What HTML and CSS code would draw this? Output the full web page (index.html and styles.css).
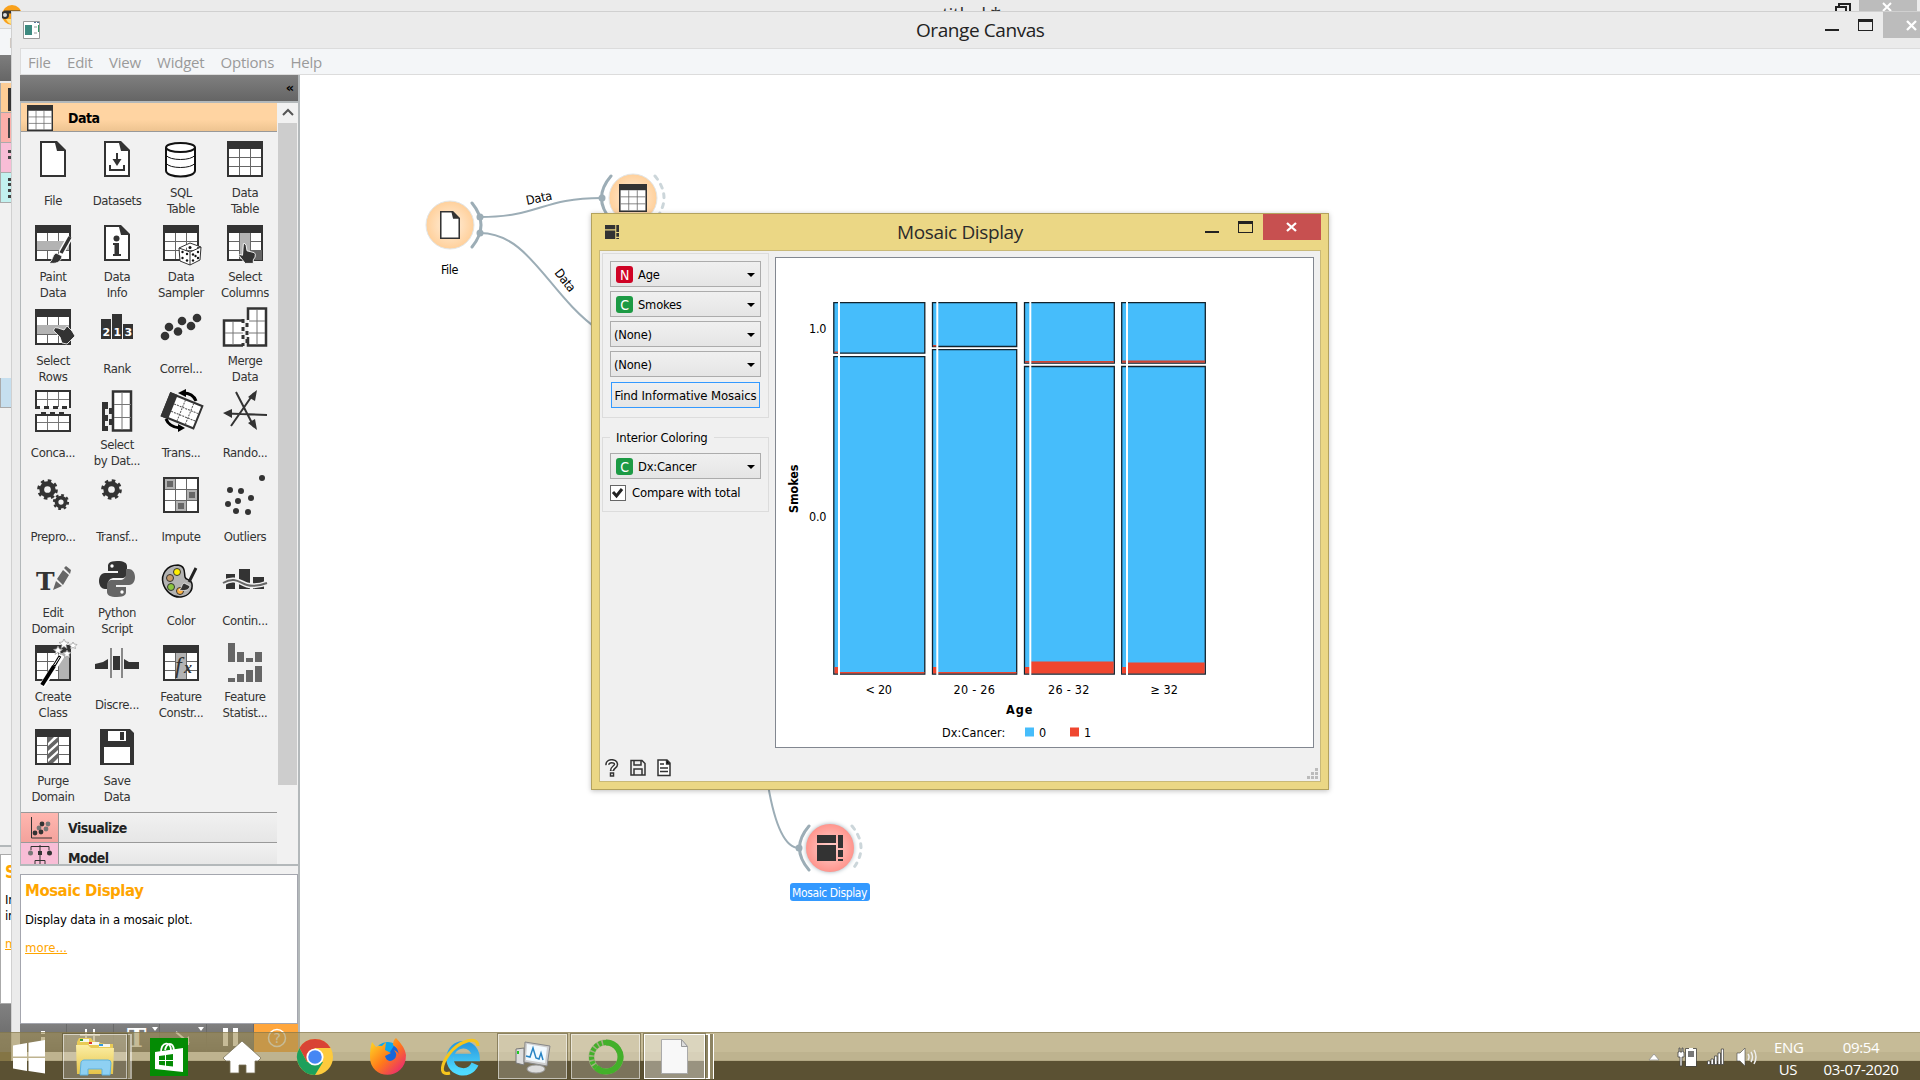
FILE: index.html
```html
<!DOCTYPE html>
<html lang="en">
<head>
<meta charset="utf-8">
<title>Orange Canvas</title>
<link rel="stylesheet" href="styles.css">
</head>
<body>
<svg class="defs" width="0" height="0">
  <defs>
    <symbol id="tbl" viewBox="0 0 48 48"><path fill="#333" d="M6 6h36v36H6z"/><path fill="#fff" d="M8 14h32v26H8z"/><path stroke="#666" d="M8 22.500h32M8 31.500h32M18.500 14v26M29.500 14v26"/></symbol>
    <symbol id="doc" viewBox="0 0 48 48"><path fill="#333" d="M11 6h17l9 9v27H11z"/><path fill="#fff" d="M13 8h13l2 8 7 0v24H13z"/></symbol>
    <symbol id="gear" viewBox="0 0 24 24"><circle cx="12" cy="12" r="6" fill="none" stroke="#333" stroke-width="5"/><circle cx="12" cy="12" r="9.300" fill="none" stroke="#333" stroke-width="3" stroke-dasharray="3.650 3.650"/></symbol>
    <symbol id="hand" viewBox="0 0 20 24"><path fill="#333" stroke="#fff" stroke-width="1" d="M6 1q2-1 3 2l1 6 8 2q2 1 1 5l-2 3v4H8L1 14q0-2 4 0z"/></symbol>
    <symbol id="mosaic" viewBox="0 0 26 26"><path fill="#333" d="M0 0h19v8H0zM0 10h19v16H0zM21 0h5v13h-5zM21 15h5v7h-5zM21 24h5v2h-5z"/></symbol>
    <radialGradient id="gO"><stop offset="0" stop-color="#fff0de"/><stop offset="1" stop-color="#ffd09b"/></radialGradient>
    <radialGradient id="gR"><stop offset="0" stop-color="#ffd3cf"/><stop offset="1" stop-color="#ff958d"/></radialGradient>
    <linearGradient id="gF" x2="0" y2="1"><stop offset="0" stop-color="#fbeea5"/><stop offset="1" stop-color="#e6c449"/></linearGradient>
    <linearGradient id="gFx" x2="1" y2="1"><stop offset="0" stop-color="#ffe226"/><stop offset=".5" stop-color="#ff7a1a"/><stop offset="1" stop-color="#e31587"/></linearGradient>
    <linearGradient id="gIe" x2="0" y2="1"><stop offset="0" stop-color="#2b9be0"/><stop offset="1" stop-color="#4fdcff"/></linearGradient>
  </defs>
</svg>

<div class="desktop">
  <div class="window back">
    <div class="back-title">
      <svg class="orange-logo" width="20" height="22" viewBox="0 0 20 22"><circle cx="10" cy="11" r="10" fill="#f9a11b"/><path fill="#ffdf80" d="M4 15h12q-3 5-6 5-4 0-6-5z"/><path stroke="#333" stroke-width="3" d="M2 8h16"/><circle cx="3" cy="11" r="3" fill="#ddd" stroke="#333" stroke-width="2"/></svg>
      <span>untitled *</span>
      <svg class="back-ctl" width="80" height="12"><path fill="none" stroke="#222" stroke-width="2" d="M-1 12V7h10v5M2 7V4h11v7"/><path fill="#bcbcbc" d="M22 0h58v12H22z"/><path stroke="#fff" stroke-width="2" d="M46 3l8 8M54 3l-8 8"/></svg>
    </div>
    <div class="back-menu">F</div>
    <div class="back-bar"></div>
    <div class="back-tab o"><i></i></div><div class="back-tab r"><i></i></div><div class="back-tab p"><i></i></div><div class="back-tab c"><i></i></div>
    <div class="back-empty"></div>
    <div class="back-tab b"></div>
    <div class="back-fill"></div>
    <div class="back-info"><h2>S</h2><p>In<br>in</p><a>m</a></div>
    <div class="back-foot"></div>
  </div>

  <div class="window main">
    <div class="titlebar">
      <svg width="19" height="19"><path fill="#fff" stroke="#999" d="M1.500.5h16v17h-16z"/><path fill="#3d8a80" d="M3 4h7v10H3z"/><path stroke="#579" stroke-dasharray="2 1" d="M12 1.500h5"/><path stroke="#ccc" stroke-width="2" d="M12 6h3M12 12h3"/><path stroke="#396" d="M16.500 4v7"/></svg>
      <h1>Orange Canvas</h1>
      <div class="win-ctl"><i class="min"></i><i class="max"></i><b><svg width="12" height="11"><path stroke="#fff" stroke-width="2.300" d="M1 1l9 9M10 1l-9 9"/></svg></b></div>
    </div>
    <nav class="menu"><span>File</span><span>Edit</span><span>View</span><span>Widget</span><span>Options</span><span>Help</span></nav>
    <div class="body">
      <aside>
        <div class="dock-bar">«</div>
        <div class="toolbox">
          <div class="tools">
            <div class="cat data"><svg width="26" height="26" viewBox="6 6 36 36"><use href="#tbl" width="48" height="48"/></svg>Data</div>
            <div class="grid">
              <div class="w"><svg viewBox="0 0 48 48"><use href="#doc"/></svg><span>File</span></div>
              <div class="w"><svg viewBox="0 0 48 48"><use href="#doc"/><path fill="none" stroke="#333" stroke-width="2" d="M17 30v5h14v-5M24 18v10"/><path fill="#333" d="M19.500 24h9L24 31z"/></svg><span>Datasets</span></div>
              <div class="w"><svg viewBox="0 0 48 48"><path fill="#fff" stroke="#111" stroke-width="2" d="M9 12.500v23c0 8 29 8 29 0v-23"/><ellipse cx="23.500" cy="12.500" rx="14.500" ry="4.500" fill="#fff" stroke="#111" stroke-width="2"/><path fill="none" stroke="#111" d="M9 20c3 6 26 6 29 0M9 28c3 6 26 6 29 0"/></svg><span>SQL<br>Table</span></div>
              <div class="w"><svg viewBox="0 0 48 48"><use href="#tbl"/></svg><span>Data<br>Table</span></div>

              <div class="w"><svg viewBox="0 0 48 48"><use href="#tbl"/><path fill="#b3b3b3" d="M8 22h32v9H8z"/><path stroke="#fff" stroke-width="6" d="M41 18L32 34"/><path stroke="#333" stroke-width="3.500" d="M41 18l-9 16"/><path fill="#333" stroke="#fff" stroke-width=".8" d="M27 34l6 3c-1 7-7 8-13 7 4-2 3-8 7-10z"/></svg><span>Paint<br>Data</span></div>
              <div class="w"><svg viewBox="0 0 48 48"><use href="#doc"/><circle cx="23.500" cy="19.500" r="3" fill="#333"/><path fill="#333" d="M20 24h6v11h2v2h-8v-2h1.500v-9H20z"/></svg><span>Data<br>Info</span></div>
              <div class="w"><svg viewBox="0 0 48 48"><use href="#tbl"/><path fill="#fff" stroke="#333" stroke-linejoin="round" d="M22 29l11-5 11 4-1 13-10 5-10-4zM22 29l11 4 11-5M33 33v13"/><g fill="#111"><circle cx="33" cy="28.500" r="1.500"/><circle cx="25.500" cy="33" r="1.200"/><circle cx="30" cy="35" r="1.200"/><circle cx="25.500" cy="39" r="1.200"/><circle cx="30" cy="41.500" r="1.200"/><circle cx="36" cy="35.500" r="1.200"/><circle cx="41" cy="33" r="1.200"/><circle cx="38.500" cy="37" r="1.200"/><circle cx="36" cy="41.500" r="1.200"/><circle cx="41" cy="39" r="1.200"/></g></svg><span>Data<br>Sampler</span></div>
              <div class="w"><svg viewBox="0 0 48 48"><use href="#tbl"/><path fill="#b3b3b3" d="M19 14h10v26H19z"/><path fill="#666" d="M30 31h11v10H30z"/><use href="#hand" x="17" y="23" width="18" height="23"/></svg><span>Select<br>Columns</span></div>

              <div class="w"><svg viewBox="0 0 48 48"><use href="#tbl"/><path fill="#b3b3b3" d="M8 22h32v9H8z"/><path fill="#333" stroke="#fff" stroke-width=".8" d="M25 26q1-2 4-1l6 2 3-4 5 5 3 5-8 8-5-1-2-6-5-5q-2-1-1-3z"/></svg><span>Select<br>Rows</span></div>
              <div class="w"><svg viewBox="0 0 48 48"><path fill="#333" d="M8 16h10v20H8zM19 11h10v25H19zM30 21h10v15H30z"/><text x="9.500" y="33" class="rank">2</text><text x="20.500" y="33" class="rank">1</text><text x="31.500" y="33" class="rank">3</text></svg><span>Rank</span></div>
              <div class="w"><svg viewBox="0 0 48 48"><g fill="#333"><circle cx="8" cy="33" r="4.300"/><circle cx="12" cy="24" r="4.300"/><circle cx="21" cy="28.500" r="4.300"/><circle cx="25" cy="18" r="4.300"/><circle cx="34" cy="23" r="4.300"/><circle cx="40" cy="15" r="4.300"/></g></svg><span>Correl...</span></div>
              <div class="w"><svg viewBox="0 0 48 48"><path fill="#fff" stroke="#333" stroke-width="2.500" d="M22 17.500H3v25h19M27 17v-11.500h18v37H27V34"/><path stroke="#777" d="M12 19v23M4 30h18M36 7v35M28 18h16M28 30h16"/><path stroke="#333" stroke-width="3" stroke-dasharray="4 4" d="M22 16v27M26 20v20"/></svg><span>Merge<br>Data</span></div>

              <div class="w"><svg viewBox="0 0 48 48"><path fill="#fff" stroke="#333" stroke-width="2" d="M7 21V4h34v17M7 27v17h34V27"/><path stroke="#777" d="M8 12.500h32M8 35.500h32M18.500 5v15M29.500 5v15M18.500 28v15M29.500 28v15"/><path stroke="#333" stroke-width="3" stroke-dasharray="5 4" d="M6 20.500h36M12 26.500h25"/><path stroke="#333" stroke-width="2" d="M6 28h36"/></svg><span>Conca...</span></div>
              <div class="w"><svg viewBox="0 0 48 48"><path fill="#fff" stroke="#333" stroke-width="2.500" d="M20 4.500h18v39H20z"/><path stroke="#777" d="M29 5v38M21 17.500h17M21 30.500h17"/><path fill="#333" d="M9 15h6v7h-3v6h3v6h-3v5h3v5H9zM16 21h4v6h-4zM16 32h4v6h-4z"/></svg><span>Select<br>by Dat...</span></div>
              <div class="w"><svg viewBox="0 0 48 48"><g transform="rotate(22 24 24)"><path fill="#fff" stroke="#333" stroke-width="2" d="M8 11.500h34v24H8z"/><path fill="#333" d="M7 10.500h8v26H7z"/><path stroke="#555" stroke-dasharray="2 1" d="M24 12v23M33 12v23M15 20h26M15 28h26"/></g><path fill="none" stroke="#000" stroke-width="3" d="M39 14q-3-8-13-8M9 32q3 8 14 9"/><path d="M21 6l8-4v8zM28 41l-7-4v8z"/></svg><span>Trans...</span></div>
              <div class="w"><svg viewBox="0 0 48 48"><path stroke="#333" stroke-width="2" d="M10 39L33 6M15 5l18 35M46 28L5 26.500"/><path fill="#333" d="M36 3l-2 11-7-4zM36 43l-9-7 7-4zM2 26l9-4v9z"/></svg><span>Rando...</span></div>

              <div class="w"><svg viewBox="0 0 48 48"><use href="#gear" x="7" y="7" width="23" height="23"/><use href="#gear" x="23" y="22" width="18" height="18"/></svg><span>Prepro...</span></div>
              <div class="w"><svg viewBox="0 0 48 48"><use href="#gear" x="7" y="7" width="23" height="23"/></svg><span>Transf...</span></div>
              <div class="w"><svg viewBox="0 0 48 48"><path fill="#fff" stroke="#333" stroke-width="2" d="M7 7h34v34H7z"/><path fill="#b3b3b3" d="M8 8h10v10H8zM30 19h10v10H30zM19 30h10v10H19z"/><path fill="#666" d="M10 10h6v6h-6zM32 21h6v6h-6zM21 32h6v6h-6z"/><path stroke="#666" d="M18.500 8v32M29.500 8v32M8 18.500h32M8 29.500h32"/></svg><span>Impute</span></div>
              <div class="w"><svg viewBox="0 0 48 48"><g fill="#333"><circle cx="41" cy="7" r="3"/><circle cx="9" cy="19" r="3"/><circle cx="20" cy="20" r="3"/><circle cx="30" cy="27" r="3"/><circle cx="17" cy="30" r="3"/><circle cx="7" cy="33" r="3"/><circle cx="15" cy="40" r="3"/><circle cx="27" cy="41" r="3"/></g></svg><span>Outliers</span></div>

              <div class="w"><svg viewBox="0 0 48 48"><text x="7" y="35" class="bigt">T</text><path fill="#666" d="M24 35l3-9 6 5zM28 24l6-9 6 5-6 10zM35 13l2-2 5 4-1 4z"/></svg><span>Edit<br>Domain</span></div>
              <div class="w"><svg viewBox="0 0 48 48"><path fill="#333" d="M24 6c-8 0-9 3-9 5v5h10v2H12c-4 0-6 4-6 8 0 5 3 8 6 8h3v-5c0-4 3-6 6-6h8c3 0 5-2 5-5v-7c0-3-3-5-10-5z"/><path fill="#666" transform="rotate(180 24 24)" d="M24 6c-8 0-9 3-9 5v5h10v2H12c-4 0-6 4-6 8 0 5 3 8 6 8h3v-5c0-4 3-6 6-6h8c3 0 5-2 5-5v-7c0-3-3-5-10-5z"/><circle cx="19" cy="11" r="1.700" fill="#fff"/><circle cx="29" cy="37" r="1.700" fill="#fff"/></svg><span>Python<br>Script</span></div>
              <div class="w"><svg viewBox="0 0 48 48"><path fill="#b3b3b3" stroke="#111" stroke-width="1.500" d="M21 10C9 10 4 20 6 28s10 15 18 14 12-7 11-13-6-3-7-7 1-11-7-12z"/><circle cx="20" cy="17" r="3.500" fill="#fe0" stroke="#333"/><circle cx="13" cy="23" r="3.500" fill="#c49a6c" stroke="#333"/><circle cx="14" cy="32" r="3.500" fill="#8cc63f" stroke="#333"/><circle cx="23" cy="36" r="3.500" fill="#fbb040" stroke="#333"/><path stroke="#222" stroke-width="3" d="M39 13l-7 14"/><path fill="#333" stroke="#fff" stroke-width=".7" d="M27 28l6 3c-1 5-6 5-11 4 3-1 2-5 5-7z"/></svg><span>Color</span></div>
              <div class="w"><svg viewBox="0 0 48 48"><path fill="#333" d="M5 19h9v15H5zM18 14h11v20H18zM32 22h11v12H32z"/><path fill="none" stroke="#f1f1f1" stroke-width="5" d="M2 28c12-7 17 0 24 2s12 1 20-2"/><path fill="none" stroke="#666" stroke-width="2" d="M2 28c12-7 17 0 24 2s12 1 20-2"/></svg><span>Contin...</span></div>

              <div class="w"><svg viewBox="0 0 48 48"><use href="#tbl"/><path fill="#b3b3b3" d="M30 14h10v26H30z"/><path stroke="#fff" stroke-width="6" d="M13 47L33 16"/><path stroke="#000" stroke-width="4" d="M13 46l12-19"/><path stroke="#000" stroke-width="3" d="M25 27l6-10"/><path stroke="#fff" d="M25.500 26l5-8"/><g fill="#fff" stroke="#999" stroke-width=".7"><path d="M35 0l1.500 3 3.500.5-3 2.500 1 3.500-3-2-3 2 1-3.500-3-2.500 3.500-.5zM29 7l1.500 3 3 .5-2.500 2 1 3-3-2-3 2 1-3-2.500-2 3-.5zM38 11l1 2 3 .5-2 2 .5 3-2.500-1.500-2.500 1.500.5-3-2-2 3-.5zM44 3l1 2 3 .5-2 2 .5 2-2.500-1-2.500 1 .5-2-2-2 3-.5z"/></g></svg><span>Create<br>Class</span></div>
              <div class="w"><svg viewBox="0 0 48 48"><path fill="#333" d="M2 25l8-2 5-3v10H2zM20 17h7v14h-7zM31 20l5 3h10v7H31z"/><path stroke="#666" stroke-width="1.500" d="M18 9v30M29 9v30"/></svg><span>Discre...</span></div>
              <div class="w"><svg viewBox="0 0 48 48"><use href="#tbl"/><path fill="#b3b3b3" d="M19 14h10v26H19z"/><text x="18" y="34" class="fx">f</text><text x="27" y="34" class="fx x">x</text></svg><span>Feature<br>Constr...</span></div>
              <div class="w"><svg viewBox="0 0 48 48"><path fill="#666" d="M7 4h7v19H7zM16 13h7v10h-7zM25 19h7v4h-7zM34 13h7v10h-7zM7 39h7v4H7zM16 35h7v8h-7zM25 31h7v12h-7zM34 27h7v16h-7z"/></svg><span>Feature<br>Statist...</span></div>

              <div class="w"><svg viewBox="0 0 48 48"><use href="#tbl"/><path fill="#fff" d="M19 14h10v26H19z"/><path fill="#666" d="M19 20v-6h6zM29 14v5L19 28v-5zM29 22v5l-10 9v-5zM29 30v5l-5 5h-5v-1z"/></svg><span>Purge<br>Domain</span></div>
              <div class="w"><svg viewBox="0 0 48 48"><path fill="#333" d="M7 6h30l4 4v32H7z"/><path fill="#fff" d="M15 8h18v10H15zM11 24h26v16H11z"/><path fill="#333" d="M27 9h4v8h-4z"/></svg><span>Save<br>Data</span></div>
            </div>
            <div class="cat"><i class="red"><svg width="24" height="24"><path fill="none" stroke="#333" d="M3.500 1v21H24"/><g fill="#777"><circle cx="20" cy="8" r="2.400"/><circle cx="11" cy="12" r="2.400"/><circle cx="18" cy="13" r="2.400"/></g><g fill="#333"><circle cx="14" cy="8" r="2.400"/><circle cx="7" cy="17" r="2.400"/><circle cx="13" cy="16" r="2.400"/></g></svg></i>Visualize</div>
            <div class="cat model"><i class="pink"><svg width="26" height="26"><path fill="none" stroke="#333" d="M13 2v20M4 7V3.500h18V7M8 21v-3.500h10V21"/><circle cx="3.500" cy="10" r="2.500" fill="#777"/><circle cx="22.500" cy="10" r="2.500" fill="#333"/><path fill="#333" d="M11 8h4v4h-4zM6 21h4v4H6zM16 21h4v4h-4z"/></svg></i>Model</div>
          </div>
          <div class="scroll"><svg width="20" height="20"><path fill="none" stroke="#555" stroke-width="2" d="M5 12l5-5 5 5"/></svg><i></i><svg width="20" height="21"><path fill="none" stroke="#555" stroke-width="2" d="M5 7l5 5 5-5"/></svg></div>
        </div>
        <div class="info"><h2>Mosaic Display</h2><p>Display data in a mosaic plot.</p><a>more...</a></div>
        <div class="dock-foot">
          <span><svg width="46" height="28"><path fill="#fff" d="M21 7h4v3h-4zM21 13h4v14h-4z"/></svg></span>
          <span><svg width="46" height="28"><path stroke="#fff" stroke-width="2" d="M19 5v22M27 5v22M13 11h20M13 19h20"/></svg></span>
          <span><svg width="47" height="28"><text x="13" y="23" class="tt">T</text><path fill="#fff" d="M38 3h6l-3 4z"/></svg></span>
          <span><svg width="47" height="28"><path stroke="#fff" stroke-width="2" d="M16 8l13 11"/><path fill="#fff" d="M29 12v9h-9zM38 3h6l-3 4z"/></svg></span>
          <span><svg width="47" height="28"><path fill="#fff" d="M16 4h5v18h-5zM26 4h5v18h-5z"/></svg></span>
          <span class="help"><svg width="46" height="28"><circle cx="23" cy="14" r="8.500" fill="none" stroke="#fff" stroke-width="1.500"/><text x="19.500" y="19" class="q">?</text></svg></span>
        </div>
      </aside>
      <main>
        <svg class="scheme" width="1620" height="985" viewBox="300 75 1620 985">
          <g fill="none" stroke="#9cadb6" stroke-width="2">
            <path d="M480 217C540 217 541 198 602 198M480 233C530 233 548 295 600 331M768 785C774 820 783 848 799 848"/>
            <path stroke-width="3" stroke-linecap="round" d="M472 203Q490 225 472 247M611 176Q592 198 611 220M809 826Q790 848 809 870"/>
            <path stroke-width="3" stroke="#ccd6da" stroke-linecap="round" stroke-dasharray="4 6" d="M655 176Q673 198 655 220M852 826Q870 848 852 870"/>
          </g>
          <g fill="#9cadb6"><circle cx="480" cy="217" r="3.500"/><circle cx="480" cy="233" r="3.500"/><circle cx="602" cy="198" r="3.500"/><circle cx="799" cy="848" r="3.500"/></g>
          <circle cx="450" cy="225" r="24" fill="url(#gO)" stroke="#e2e6e8"/><circle cx="633" cy="198" r="24" fill="url(#gO)" stroke="#e2e6e8"/><circle class="glow" cx="830" cy="848" r="24" fill="url(#gR)"/>
          <svg x="440" y="211" width="20" height="28" viewBox="11 6 26 36" preserveAspectRatio="none"><use href="#doc" width="48" height="48"/></svg>
          <svg x="619" y="184" width="28" height="28" viewBox="6 6 36 36"><use href="#tbl" width="48" height="48"/></svg>
          <use href="#mosaic" x="817" y="835" width="26" height="26"/>
          <text x="449.500" y="274" text-anchor="middle" textLength="17">File</text>
          <text transform="translate(527 205) rotate(-12)" textLength="26">Data</text>
          <text transform="translate(554 273) rotate(52)" textLength="25">Data</text>
          <rect x="790" y="883" width="80" height="18" rx="3" fill="#39f"/>
          <text x="792" y="897" fill="#fff" textLength="75" lengthAdjust="spacingAndGlyphs">Mosaic Display</text>
        </svg>
      </main>
    </div>
  </div>

  <div class="window dialog">
    <div class="dlg-title">
      <svg width="14" height="14"><use href="#mosaic" width="14" height="14"/></svg>
      <h1>Mosaic Display</h1>
      <div class="dlg-ctl"><i class="min"></i><i class="max"></i><b><svg width="12" height="11"><path stroke="#fff" stroke-width="2.300" d="M1 1l9 8M10 1l-9 8"/></svg></b></div>
    </div>
    <div class="client">
      <div class="controls">
        <div class="group">
          <div class="combo"><b class="n">N</b>Age</div>
          <div class="combo"><b>C</b>Smokes</div>
          <div class="combo none">(None)</div>
          <div class="combo none">(None)</div>
          <button>Find Informative Mosaics</button>
        </div>
        <div class="group second"><h3>Interior Coloring</h3>
          <div class="combo"><b>C</b>Dx:Cancer</div>
          <label><i><svg width="14" height="14"><path fill="none" stroke="#222" stroke-width="3" d="M2 6l3.500 4L11 3"/></svg></i>Compare with total</label>
        </div>
        <div class="tools-row">
          <svg width="14" height="18"><path fill="none" stroke="#333" stroke-width="4.500" d="M2.500 6C2 1 11 1 11 5.500 11 8 7 8 7 12"/><path fill="none" stroke="#fff" stroke-width="1.500" d="M2.500 6C2 1 11 1 11 5.500 11 8 7 8 7 11.500"/><path fill="#fff" stroke="#333" stroke-width="1.500" d="M5.500 14h3v3h-3z"/></svg>
          <svg width="16" height="18"><path fill="none" stroke="#333" stroke-width="1.500" d="M1 1.500h11l3 3V16H1zM4 2v4h7V2M4 16v-6h8v6"/></svg>
          <svg width="14" height="18"><path fill="#fff" stroke="#333" stroke-width="1.500" d="M1 1h9l3 3v12.500H1z"/><path stroke="#333" stroke-width="1.300" d="M3 5h4M3 9h8M3 12.500h8M9.500 1v4H13"/></svg>
        </div>
      </div>
      <svg class="plot" width="539" height="491" viewBox="775 257 539 491">
        <g fill="#46bdfb" stroke="#12222c" stroke-width="1.300">
          <path d="M833.800 302.700h91v50.500h-91zM833.800 356.700h91V674h-91zM932.500 302.700h84.200v43.800h-84.200zM932.500 349.700h84.200V674h-84.200zM1024.500 302.700H1114.300v60.500H1024.500zM1024.500 366.500H1114.300V674H1024.500zM1121.700 302.700H1205.300v60.500H1121.700zM1121.700 366.500H1205.300V674H1121.700z"/>
        </g>
        <g fill="#ef462f">
          <path d="M834.500 667h4.500v6.500h-4.500zM840 672h84.500v1.500h-84.500zM933 667h4v6.500h-4zM938 672h78.500v1.500h-78.500zM1025 667h5v6.500h-5zM1031 661.500h82.700v12h-82.700zM1122 667h5v6.500h-5zM1128 662.500h76.700v11h-76.700z"/>
          <path fill="#cf4433" d="M834.500 351.500h4.500v1.500h-4.500zM933 345h4v1.500h-4zM1025 361h89v1.800h-89zM1122 360.500h83v2.200h-83z"/>
        </g>
        <path stroke="#fff" stroke-width="2" d="M839 302v373M937.300 302v373M1030.300 302v373M1127 302v373"/>
        <text x="826" y="333" text-anchor="end" textLength="17">1.0</text><text x="826" y="521" text-anchor="end" textLength="17">0.0</text>
        <text x="878.500" y="694" text-anchor="middle" textLength="26">&lt; 20</text><text x="974" y="694" text-anchor="middle" textLength="41">20 - 26</text><text x="1068.500" y="694" text-anchor="middle" textLength="41">26 - 32</text><text x="1164" y="694" text-anchor="middle" textLength="27">≥ 32</text>
        <text class="axis" x="1019" y="714" text-anchor="middle" textLength="26">Age</text>
        <text class="axis" transform="translate(798 489) rotate(-90)" text-anchor="middle" textLength="48">Smokes</text>
        <text x="942" y="737" textLength="63">Dx:Cancer:</text>
        <path fill="#46bdfb" d="M1025 727.500h9v9h-9z"/><text x="1039" y="737">0</text>
        <path fill="#ef462f" d="M1070 727.500h9v9h-9z"/><text x="1084" y="737">1</text>
      </svg>
      <svg class="grip" width="11" height="12"><path fill="#bbb" d="M8 0h3v3H8zM4 4h3v3H4zM8 4h3v3H8zM0 8h3v3H0zM4 8h3v3H4zM8 8h3v3H8z"/></svg>
    </div>
  </div>

  <footer class="taskbar">
    <div class="apps">
      <div class="app start"><svg width="34" height="34"><path fill="#fff" d="M1 5.500l14-2.500v13.500H1zM16.500 2.700L33 0v16.500H16.500zM1 18h14v13L1 28.500zM16.500 18H33v15.500l-16.500-2.500z"/></svg></div>
      <div class="app open stack"><svg width="40" height="40"><path fill="#e9cb55" d="M2 5l2-4h12l2 3 12 3h8v30H2z"/><path fill="#f7f7ee" d="M5 2h9v3H5zM14 5h10v3H14zM24 7h11v3H24z"/><path fill="#393" d="M5 2h3v2H5z"/><path fill="#d33" d="M14 5h3v2h-3z"/><path fill="#39d" d="M24 7h4v2h-4z"/><path fill="url(#gF)" d="M1 8h12l3 3h23l-1 26H2z"/><path fill="#8ed0f2" stroke="#5fb1dd" d="M5 38l1-13q1-2 3-2h24q3 0 3 3l-1 12h-8v-6H13v6z"/></svg></div>
      <div class="app store"><svg width="38" height="38"><path fill="#048b04" d="M0 0h38v38H0z"/><path fill="none" stroke="#fff" stroke-width="1.800" d="M11 15c0-12 10-12 10-3M15 12c2-8 8-8 9 0"/><path fill="#fff" d="M5 14l28-4v24L5 31z"/><path fill="#048b04" d="M9 18l6-.8v4.800H9zM16 17l7-1v6h-7zM9 23h6v4.500l-6-.7zM16 23h7v5.500l-7-.8z"/></svg></div>
      <div class="app home"><svg width="40" height="34"><path fill="#fff" stroke="#7a7258" stroke-width=".8" d="M20 1l19 17-3 3h-3v12h-9v-8h-7v8H8V21H4l-3-3z"/></svg></div>
      <div class="app chrome"><svg width="38" height="38"><circle cx="19" cy="19" r="18" fill="#fdca3d"/><path fill="#d94335" d="M3.400 10A18 18 0 0 1 34.600 10H19l-8 14z"/><path fill="#1da05c" d="M3.400 10A18 18 0 0 0 19 37l8-13H11z"/><circle cx="19" cy="19" r="8.600" fill="#fff"/><circle cx="19" cy="19" r="6.800" fill="#4687f4"/></svg></div>
      <div class="app ff"><svg width="38" height="38"><circle cx="18" cy="20" r="14" fill="#1866d8"/><path fill="#0aa7f0" d="M9 8q8-7 17-2l-5 8-9 2z"/><path fill="url(#gFx)" d="M3 4l4 5q3-2 6-1l4-4-1 8 6 3-6 3q2 7 8 4 6-4 1-10 5 2 5 6-1-9-6-11 0-5 3-7 9 9 10 17c0 26-36 26-36 2Q1 10 3 4z"/></svg></div>
      <div class="app ie"><svg width="40" height="38"><path fill="none" stroke="url(#gIe)" stroke-width="7.500" d="M13 19.500h22C34 2 10 3 9 20c0 15 19 19 25 6"/><path fill="none" stroke="#f6c51d" stroke-width="3" d="M37 8C37-3 18 3 8 16 0 27-2 38 9 35"/></svg></div>
      <div class="app open pc"><svg width="38" height="34"><path fill="#ddd" stroke="#777" d="M2 9l8-1v17l-8-2z"/><path fill="#2c2" d="M3 11h2v3H3z"/><path fill="#cfcfcf" stroke="#888" d="M11 2l25 4-3 20-23-4z"/><path fill="#f2faff" d="M13 4l20 3.500-2 15.500-19-3z"/><path fill="none" stroke="#2884c4" stroke-width="1.500" d="M12 16l4 1 3-9 3 10 3 1 2-6 2 7"/><ellipse cx="22" cy="29" rx="9" ry="4" fill="#ddd" stroke="#999"/></svg></div>
      <div class="app open ana"><svg width="38" height="38"><circle cx="19" cy="19" r="14.500" fill="none" stroke="#a4b184" stroke-width="6"/><path fill="none" stroke="#43b02a" stroke-width="6" d="M19 4.500a14.500 14.500 0 1 1-10 25"/><path fill="none" stroke="#43b02a" stroke-width="5" stroke-dasharray="3 1.500" d="M9 29.500A14.500 14.500 0 0 1 19 4.500"/></svg></div>
      <div class="app open active stack2"><svg width="28" height="36"><path fill="#f8f8f8" stroke="#aaa" d="M.5.500h20l6 7V34.500H.5z"/><path fill="#ddd" stroke="#999" d="M20.500.500v7h6z"/></svg></div>
    </div>
    <div class="tray">
      <svg class="up" width="12" height="8"><path fill="#fff" stroke="#888" stroke-width=".7" d="M6 1l5 6H1z"/></svg>
      <svg class="bat" width="20" height="20"><path fill="#fff" stroke="#444" stroke-width=".8" d="M1 5h1V1h1v4h2V1h1v4h1v5H5v9H3v-9H1z"/><path fill="#777" stroke="#444" stroke-width="3.500" d="M10 3h8v15h-8z"/><path fill="#777" stroke="#fff" stroke-width="2" d="M10 3h8v15h-8z"/><path fill="#fff" d="M10 10h8v8h-8zM12 1h4v2h-4z"/></svg>
      <svg class="sig" width="17" height="17"><path fill="#fff" stroke="#333" stroke-width=".7" d="M.5 13h2.500v3.500H.5zM4 11h2.500v5.500H4zM7.500 8H10v8.500H7.500zM11 5h2.500v11.500H11zM14.300 1h2.300v15.500h-2.300z"/></svg>
      <svg class="spk" width="22" height="20"><path fill="#fff" stroke="#444" stroke-width=".6" d="M1 6h3l5-5v18l-5-5H1z"/><path fill="none" stroke="#eee" stroke-width="1.500" d="M12 7q2 3 0 6M15 5q3 5 0 10M18 3q4 7 0 14"/></svg>
      <div class="lang">ENG<br>US</div>
      <div class="clock">09:54<br>03-07-2020</div>
    </div>
  </footer>
</div>
</body>
</html>
```
FILE: styles.css
```css
* { box-sizing: border-box; }
html, body { margin: 0; height: 100%; overflow: hidden; }
body { font: 13px/16px "DejaVu Sans Condensed", "DejaVu Sans", sans-serif; font-stretch: condensed; letter-spacing: -.2px; color: #000; }
svg { display: block; flex: none; }
svg text { font-size: 12.5px; letter-spacing: -.4px; }
h1, h2, h3, p { margin: 0; font-weight: 400; }
i { font-style: normal; }
.defs { position: absolute; }
.desktop { position: relative; width: 1920px; height: 1080px; overflow: hidden; background: #5b5133; }
.window { position: absolute; }

/* window behind the main one */
.back { left: 0; top: 0; width: 1920px; height: 1052px; background: #ebebeb; display: flex; flex-direction: column; }
.back-title { height: 28px; flex: none; position: relative; text-align: center; font: 19px/29px "Open Sans", sans-serif; color: #333; letter-spacing: -.3px; }
.orange-logo { position: absolute; left: 2px; top: 4px; }
.back-ctl { position: absolute; left: 1837px; top: 0; overflow: visible; }
.back-menu { height: 27px; background: #f4f6f8; border-top: 1px solid #d5d5d5; font: 15px/26px "Open Sans"; padding-left: 9px; color: #6ab; }
.back-bar { height: 26px; background: linear-gradient(#7d7d7d, #666); margin-bottom: 2px; flex: none; }
.back-tab { height: 30px; width: 12px; flex: none; border: 1px solid #aaa; border-width: 0 0 1px 1px; padding: 5px 0 0 7px; }
.back-tab i { display: block; width: 4px; height: 20px; border-left: 3px dotted #444; }
.o { background: #fdcd95; } .o i { border: 2px solid #333; background: #fff; height: 23px; }
.r { background: #fbb0aa; } .r i { border-left: 2px solid #444; } .p { background: #f8bdd6; } .p i { height: 9px; margin-top: 2px; } .c { background: #c2f1ef; } .b { background: #c6dfef; }
.back-empty { height: 175px; background: #f1f1f1; flex: none; }
.back-fill { height: 439px; background: #f1f1f1; border-bottom: 2px solid #b3b8ba; flex: none; margin-bottom: 7px; }
.back-info { height: 150px; flex: none; background: #fff; border: 1px solid #aaa; padding: 6px 4px; }
.back-info h2 { font-weight: 700; font-size: 17px; line-height: 22px; color: #ffa500; }
.back-info p { margin: 9px 0 12px; }
.back-info a, .info a { color: #ffa500; text-decoration: underline; }
.back-foot { flex: 1; background: linear-gradient(#808080, #666); }

/* main window */
.main { left: 11px; top: 11px; width: 1920px; height: 1050px; background: #ebebeb; border: 1px solid #d0d0d0; padding-left: 8px; display: flex; flex-direction: column; padding-bottom: 8px; }
.titlebar { height: 36px; flex: none; display: flex; align-items: flex-start; position: relative; }
.titlebar > svg { margin: 9px 0 0 2px; }
.titlebar h1 { margin: 4px 0 0 875px; font: 19px/29px "Open Sans", sans-serif; letter-spacing: -.42px; color: #222; }
.win-ctl { position: absolute; left: 1805px; top: 0; display: flex; }
.min { width: 14px; height: 2px; background: #222; margin-top: 17px; }
.max { width: 15px; height: 12px; border: 1px solid #222; border-top-width: 3px; margin: 7px 10px 0 19px; }
.win-ctl b { width: 58px; height: 26px; background: #bcbcbc; display: grid; place-items: center; }
.menu { height: 27px; flex: none; display: flex; background: #f4f6f8; border: 1px solid #dcdcdc; border-width: 1px 0 1px 1px; padding-left: 7px; font: 15px/26px "Open Sans", sans-serif; color: #9a9a9a; letter-spacing: -.25px; gap: 16.3px; }
.body { flex: 1; min-height: 0; display: flex; }
aside { width: 280px; flex: none; display: flex; flex-direction: column; background: #f1f1f1; border-right: 2px solid #b3b8ba; }
.dock-bar { height: 26px; flex: none; background: linear-gradient(#7f7f7f, #656565); text-align: right; font: bold 13px/25px "DejaVu Sans"; padding-right: 4px; }
.toolbox { height: 765px; flex: none; display: flex; border: 1px solid #b3b8ba; border-width: 2px 0 2px 1px; overflow: hidden; }
.tools { width: 256px; overflow: hidden; }
.cat { height: 30px; display: flex; align-items: center; font-weight: 700; font-size: 14px; border-top: 1px solid #999; background: linear-gradient(#f1f1f1, #e6e6e6); color: #222; letter-spacing: -.5px; }
.cat.data { height: 29px; padding-top: 1px; background: linear-gradient(#ffd4a2 60%, #eec491); border: 0; border-bottom: 1px solid #999; padding-left: 6px; gap: 15px; color: #000; }
.cat i { width: 38px; height: 29px; border-right: 1px solid #999; margin-right: 9px; display: grid; place-items: center; }
.red { background: linear-gradient(#ffb7b0, #f3a29c); } .pink { background: #f8bdd6; }
.cat.model { height: 24px; align-items: flex-start; line-height: 30px; overflow: hidden; }
.cat.model i { align-items: start; }
.grid { display: grid; grid-template-columns: repeat(4, 64px); grid-auto-rows: 84px; padding-bottom: 8px; letter-spacing: -.4px; }
.w { display: grid; grid-template-rows: 48px 33px; padding-top: 3px; justify-items: center; align-items: center; text-align: center; color: #333; }
.w span { padding-top: 2px; }
.w svg { width: 48px; height: 48px; overflow: visible; }
svg .rank { font: bold 11px "DejaVu Sans"; fill: #fff; }
svg .bigt { font: bold 25px "DejaVu Serif", serif; fill: #333; }
svg .fx { font: italic 24px "Liberation Serif", serif; fill: #333; }
svg .fx.x { font-size: 16px; font-weight: 700; }
.scroll { width: 21px; padding-left: 1px; display: flex; flex-direction: column; background: #f1f1f1; }
.scroll i { height: 662px; width: 19px; background: #cdcdcd; margin-bottom: 78px; flex: none; }
.info { margin-top: 8px; height: 150px; flex: none; background: #fff; border: 1px solid #a4a6ae; padding: 6px 4px; }
.info h2 { font-weight: 700; font-size: 16.500px; line-height: 20px; color: #ffa500; letter-spacing: -.4px; }
.info p { margin: 11px 0 12px; }
.info a { letter-spacing: .1px; }
.dock-foot { flex: 1; display: flex; background: linear-gradient(#808080, #666); }
.dock-foot span { width: 46.8px; flex: none; border-right: 1px solid #6a6a6a; overflow: hidden; height: 28px; }
.dock-foot .help { background: #ffa63c; flex: 1; border: 0; }
svg .tt { font: bold 26px "DejaVu Serif", serif; fill: #fff; }
svg .q { font: 14px "DejaVu Sans", sans-serif; fill: #fff; }
main { flex: 1; background: #fff; min-width: 0; overflow: hidden; }
.glow { filter: drop-shadow(0 0 2px #9cadb6); }

/* floating dialog */
.dialog { left: 591px; top: 213px; width: 738px; height: 577px; background: #ebd785; border: 1px solid #b3a25e; box-shadow: 0 1px 5px rgba(0,0,0,.25); padding: 0 7px 7px; display: flex; flex-direction: column; }
.dlg-title { height: 36px; flex: none; display: flex; align-items: flex-start; justify-content: space-between; }
.dlg-title > svg { margin: 11px 0 0 6px; }
.dlg-title h1 { font: 19px/36px "Open Sans", sans-serif; letter-spacing: -.37px; color: #2b2b2b; margin: 0 0 0 96px; }
.dlg-ctl { display: flex; }
.dlg-ctl b { width: 58px; height: 26px; background: #c75050; display: grid; place-items: center; }
.client { flex: 1; position: relative; background: #f0f0f0; border: 1px solid #c9b978; display: flex; align-items: flex-start; }
.controls { width: 175px; padding: 2px 6px 0 2px; height: 100%; display: flex; flex-direction: column; }
.plot { margin-top: 6px; background: #fff; outline: 1px solid #828790; outline-offset: -1px; }
.group { border: 1px solid #dcdcdc; padding: 7px; width: 167px; height: 165px; display: flex; flex-direction: column; gap: 4px; flex: none; }
.combo { height: 26px; width: 151px; border: 1px solid #acacac; background: linear-gradient(#f0f0f0, #e5e5e5); display: flex; align-items: center; gap: 5px; padding-left: 5px; padding-top: 1px; position: relative; font-size: 12.800px; flex: none; }
.combo.none { padding-left: 3px; }
.combo::after { content: ""; margin-left: auto; margin-right: 5px; border: 4px solid transparent; border-top-color: #000; border-bottom: 0; }
.combo b { width: 17px; height: 17px; border-radius: 3px; background: #1c9a44; color: #fff; font-weight: 400; text-align: center; line-height: 18px; font-size: 14px; }
.combo b.n { background: #cf0325; }
button { height: 26px; width: 149px; margin: 1px 1px 0; padding: 1px 0 0; border: 1px solid #39f; background: linear-gradient(#f0f0f0, #e5e5e5); font: inherit; letter-spacing: -.12px; white-space: nowrap; }
.second { margin-top: 19px; height: 75px; padding-top: 0; gap: 6px; }
.second h3 { font-size: 13px; line-height: 16px; margin-top: -8px; margin-bottom: 1px; align-self: flex-start; padding: 0 6px; background: #f0f0f0; }
label { display: flex; align-items: center; gap: 6px; }
label i { width: 16px; height: 16px; border: 1px solid #666; background: #fff; }
.tools-row { margin-top: auto; display: flex; gap: 11px; padding: 0 0 4px 3px; }
.grip { position: absolute; right: 2px; bottom: 1px; }
svg .axis { font-weight: 700; }

/* taskbar */
.taskbar { position: absolute; left: 0; top: 1032px; width: 1920px; height: 48px; display: flex; justify-content: space-between; background: rgba(160,142,82,.6); border-top: 1px solid rgba(120,110,70,.5); }
.taskbar::before { content: ""; position: absolute; left: 0; right: 0; bottom: 0; height: 19px; background: #5b5133; }
.apps, .tray { position: relative; display: flex; align-items: center; }
.app { height: 47px; display: grid; place-items: center; flex: none; }
.start { width: 58px; }
.open { border: 1px solid rgba(255,255,255,.55); outline: 1px solid rgba(80,72,40,.5); background: rgba(255,255,255,.2); width: 69px; height: 45px; margin-right: 4px; }
.stack { width: 64px; margin: 0 23px 0 5px; box-shadow: 4px 0 0 -1px #8d8463, 5px 0 0 0 rgba(255,255,255,.5); }
.store { width: 38px; }
.home { width: 40px; margin-left: 34px; }
.chrome { width: 38px; margin-left: 34px; }
.ff { width: 38px; margin-left: 35px; }
.ie { width: 40px; margin: 0 17px 0 34px; }
.active { width: 61px; border-color: #fff; background: rgba(255,255,255,.38); box-shadow: 4px 0 0 -1px #8d8463, 5px 0 0 0 #fff, 8px 0 0 0 #8d8463, 9px 0 0 0 #fff; }
.tray { font: 15px/22px "Open Sans", sans-serif; letter-spacing: -.35px; color: #fff; text-align: center; padding-right: 13px; }
.up { margin-right: 17px; }
.bat { margin-right: 10px; } .sig { margin-right: 12px; } .spk { margin-right: 16px; }
.lang { width: 28px; } .clock { width: 92px; margin-left: 13px; }
.tray div { padding-top: 2px; }
```
